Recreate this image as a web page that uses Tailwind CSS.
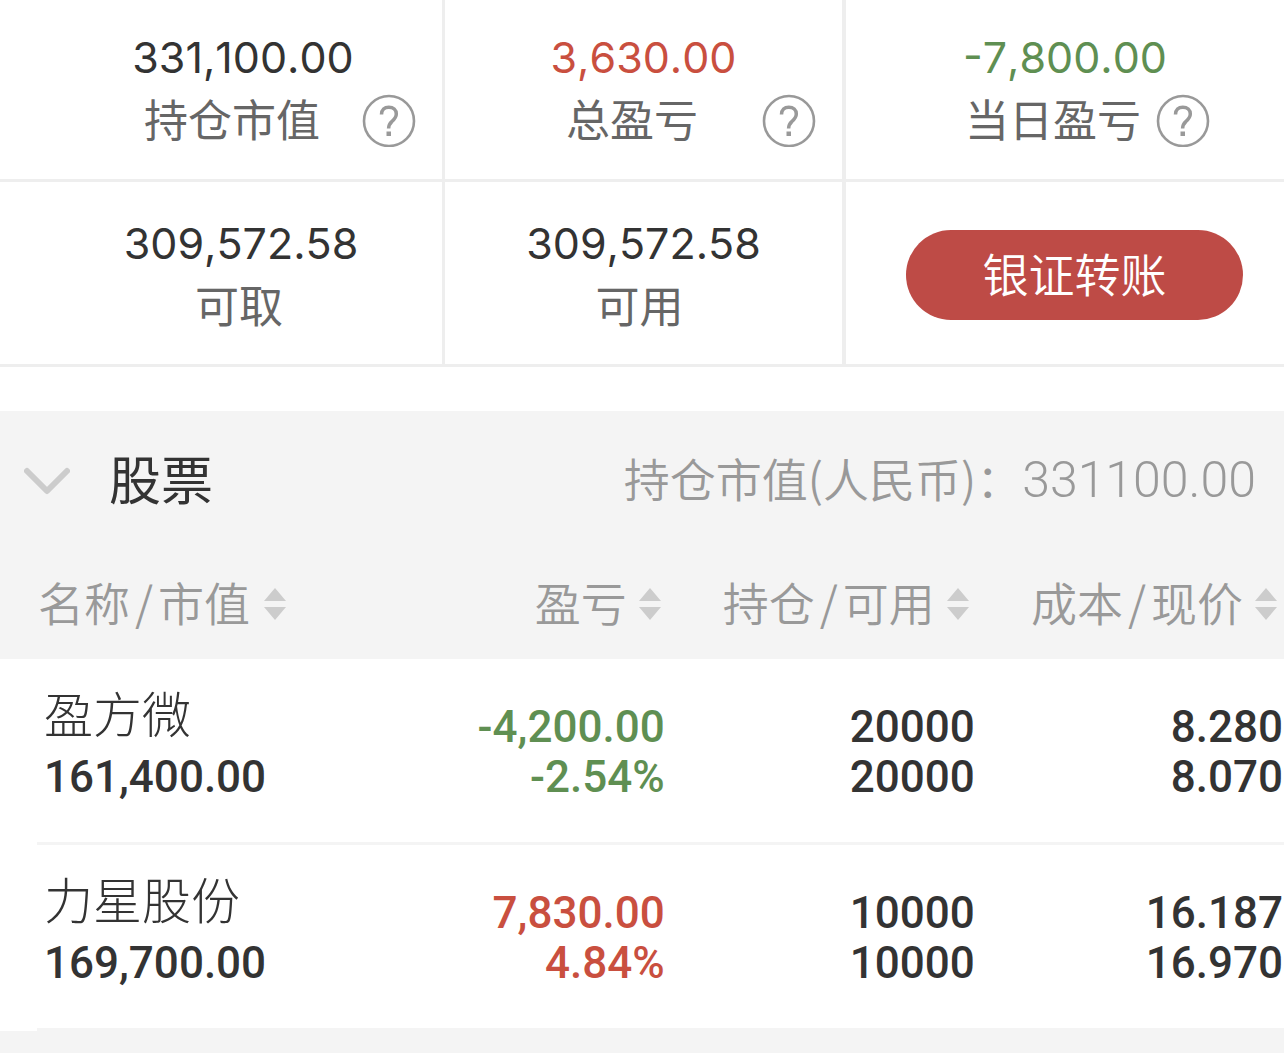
<!DOCTYPE html>
<html lang="zh-CN">
<head>
<meta charset="utf-8">
<meta name="viewport" content="width=device-width, initial-scale=1">
<title>股票持仓</title>
<script src="https://cdn.jsdelivr.net/npm/@tailwindcss/browser@4"></script>
</head>
<body class="min-h-screen bg-[#f4f4f4] text-[#333] font-['Noto_Sans_CJK_SC',sans-serif]">
<svg class="hidden" aria-hidden="true">
  <symbol id="help" viewBox="0 0 54 54">
    <circle cx="27" cy="28" r="25" fill="none" stroke="#999" stroke-width="2.600"/>
    <path d="M19.500 21.500C19.500 16.500 22.500 14.200 26.800 14.200C31.300 14.200 34.300 17 34.300 21C34.300 24.500 32.300 26.300 29.800 28.600C27.600 30.700 26.600 32 26.600 35.500" fill="none" stroke="#999" stroke-width="3.500"/>
    <rect x="24.500" y="38.500" width="4.500" height="4.500" fill="#999"/>
  </symbol>
  <symbol id="sort" viewBox="0 0 22 32">
    <path d="M11 0L22 13H0zM11 32L22 19H0z" fill="#ccc"/>
  </symbol>
</svg>

<main>
  <section class="bg-white pb-11">
    <div class="grid grid-cols-[445fr_401fr_438fr] text-center text-[44px] leading-[58px] text-[#666]">
      <div class="border-r-3 border-b-3 border-[#eee] pt-7 pb-[29px]">
        <div class="pl-11 font-[Inter,sans-serif] text-[43px] text-[#333] [font-kerning:none]">331,100.00</div>
        <div class="mt-1 flex items-center justify-end gap-[42px] pr-[26px]">
          <span class="pb-1 leading-14">持仓市值</span>
          <button type="button" aria-label="持仓市值说明"><svg class="size-[54px]"><use href="#help"/></svg></button>
        </div>
      </div>
      <div class="border-r-4 border-b-3 border-[#eee] pt-7 pb-[29px]">
        <div class="font-[Inter,sans-serif] text-[43px] text-[#c94f3f] [font-kerning:none]">3,630.00</div>
        <div class="mt-1 flex items-center justify-end gap-[64px] pr-[26px]">
          <span class="pb-1 leading-14">总盈亏</span>
          <button type="button" aria-label="总盈亏说明"><svg class="size-[54px]"><use href="#help"/></svg></button>
        </div>
      </div>
      <div class="border-b-3 border-[#eee] pt-7 pb-[29px]">
        <div class="font-[Inter,sans-serif] text-[43px] text-[#5f8f52] [font-kerning:none]">-7,800.00</div>
        <div class="mt-1 flex items-center justify-end gap-[15px] pr-[74px]">
          <span class="pb-1 leading-14">当日盈亏</span>
          <button type="button" aria-label="当日盈亏说明"><svg class="size-[54px]"><use href="#help"/></svg></button>
        </div>
      </div>
      <div class="border-r-3 border-b-3 border-[#eee] pt-8 pb-7">
        <div class="pl-10 font-[Inter,sans-serif] text-[43px] text-[#333] [font-kerning:none]">309,572.58</div>
        <div class="mt-1 pb-1 pl-9 leading-14">可取</div>
      </div>
      <div class="border-r-4 border-b-3 border-[#eee] pt-8 pb-7">
        <div class="font-[Inter,sans-serif] text-[43px] text-[#333] [font-kerning:none]">309,572.58</div>
        <div class="mt-1 pr-2 pb-1 leading-14">可用</div>
      </div>
      <div class="flex items-center border-b-3 border-[#eee] pt-1 pr-[41px] pl-[60px]">
        <button type="button" class="h-[90px] w-full rounded-full bg-[#be4b46] pb-1.5 text-[46px] font-[350] text-white">银证转账</button>
      </div>
    </div>
  </section>

  <section>
    <header class="flex h-[138px] items-center pr-7 pl-6">
      <button type="button" aria-label="收起股票列表">
        <svg class="h-8 w-[46px]" viewBox="0 0 46 32"><path d="M3 7L23 27L43 7" fill="none" stroke="#ccc" stroke-width="6" stroke-linecap="round" stroke-linejoin="round"/></svg>
      </button>
      <h2 class="ml-[39px] pb-1 text-[52px] leading-14">股票</h2>
      <p class="ml-auto pb-1 text-[46px] leading-14 font-[350] text-[#999]">持仓市值(人民币)：<span class="font-[Roboto,sans-serif] text-[50px] font-light">331100.00</span></p>
    </header>

    <table class="w-full table-fixed">
      <colgroup><col class="w-[28%]"><col class="w-[24%]"><col class="w-[24%]"><col class="w-[24%]"></colgroup>
      <thead class="h-[110px] text-[46px] leading-[54px] text-[#999]">
        <tr>
          <th class="p-0 font-[350]"><button type="button" class="flex items-center gap-[14px] pl-[38px] whitespace-nowrap"><span class="flex gap-[5px] pb-1.5"><span>名称</span><span>/</span><span>市值</span></span><svg class="h-8 w-[22px]"><use href="#sort"/></svg></button></th>
          <th class="p-0 font-[350]"><button type="button" class="ml-auto flex items-center gap-3 pr-[7px] whitespace-nowrap"><span class="pb-1.5">盈亏</span><svg class="h-8 w-[22px]"><use href="#sort"/></svg></button></th>
          <th class="p-0 font-[350]"><button type="button" class="ml-auto flex items-center gap-3 pr-[7px] whitespace-nowrap"><span class="flex gap-[5px] pb-1.5"><span>持仓</span><span>/</span><span>可用</span></span><svg class="h-8 w-[22px]"><use href="#sort"/></svg></button></th>
          <th class="p-0 font-[350]"><button type="button" class="ml-auto flex items-center gap-3 pr-[7px] whitespace-nowrap"><span class="flex gap-[5px] pb-1.5"><span>成本</span><span>/</span><span>现价</span></span><svg class="h-8 w-[22px]"><use href="#sort"/></svg></button></th>
        </tr>
      </thead>
      <tbody class="bg-white text-right font-[Roboto,sans-serif] text-[44px] leading-[50px] font-medium">
        <tr>
          <td class="p-0 text-left"><div class="ml-[37px] flex h-[186px] flex-col justify-end border-b-3 border-[#f4f4f4] pb-10 pl-[7px]"><span class="mb-[15px] font-['Noto_Sans_CJK_SC',sans-serif] text-[49px] font-light">盈方微</span><span>161,400.00</span></div></td>
          <td class="p-0 text-[#5f8f52]"><div class="flex h-[186px] flex-col justify-end border-b-3 border-[#f4f4f4] pb-10 pr-[3px]"><span>-4,200.00</span><span>-2.54%</span></div></td>
          <td class="p-0"><div class="flex h-[186px] flex-col justify-end border-b-3 border-[#f4f4f4] pr-[1px] pb-10"><span>20000</span><span>20000</span></div></td>
          <td class="p-0"><div class="flex h-[186px] flex-col justify-end border-b-3 border-[#f4f4f4] pr-[1px] pb-10"><span>8.280</span><span>8.070</span></div></td>
        </tr>
        <tr>
          <td class="p-0 text-left"><div class="ml-[37px] flex h-[186px] flex-col justify-end border-b-3 border-[#f4f4f4] pb-10 pl-[7px]"><span class="mb-[15px] font-['Noto_Sans_CJK_SC',sans-serif] text-[49px] font-light">力星股份</span><span>169,700.00</span></div></td>
          <td class="p-0 text-[#c94f3f]"><div class="flex h-[186px] flex-col justify-end border-b-3 border-[#f4f4f4] pb-10 pr-[3px]"><span>7,830.00</span><span>4.84%</span></div></td>
          <td class="p-0"><div class="flex h-[186px] flex-col justify-end border-b-3 border-[#f4f4f4] pr-[1px] pb-10"><span>10000</span><span>10000</span></div></td>
          <td class="p-0"><div class="flex h-[186px] flex-col justify-end border-b-3 border-[#f4f4f4] pr-[1px] pb-10"><span>16.187</span><span>16.970</span></div></td>
        </tr>
      </tbody>
    </table>
  </section>
</main>
</body>
</html>
